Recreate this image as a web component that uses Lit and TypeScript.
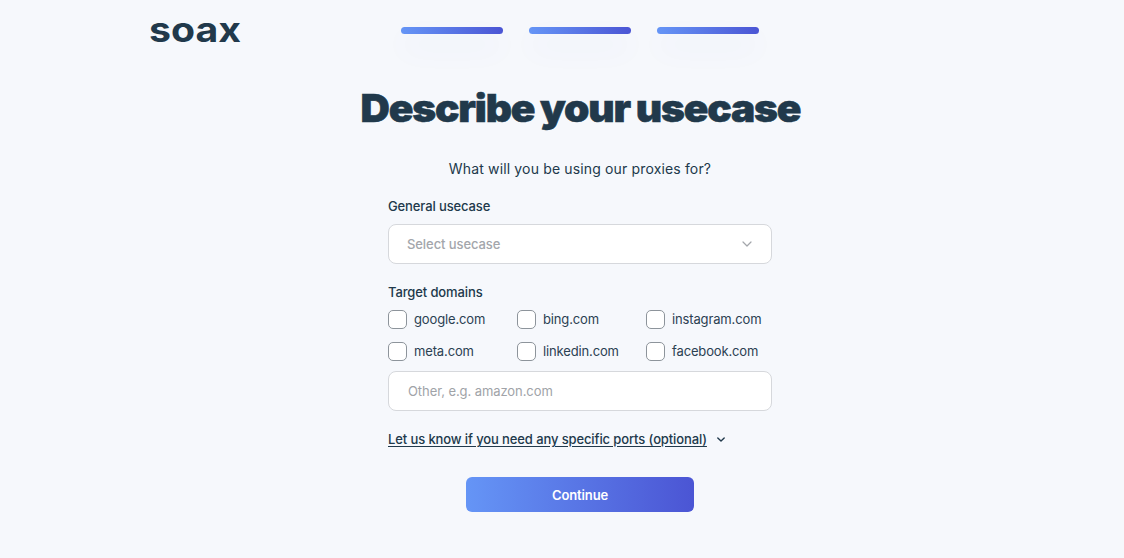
import { LitElement, html, css } from "lit";
import { customElement } from "lit/decorators.js";

const DOMAINS = ["google.com", "bing.com", "instagram.com", "meta.com", "linkedin.com", "facebook.com"];

const chevron = html`<svg viewBox="0 0 10 6" width="10" height="6" fill="none" stroke="currentColor" stroke-linecap="round" stroke-linejoin="round"><path d="M1 1l4 4 4-4" /></svg>`;

@customElement("app-root")
export class AppRoot extends LitElement {
  static styles = css`
    :host {
      display: block;
      width: 1124px;
      height: 558px;
      overflow: hidden;
      background: #f6f8fc;
      color: #21394b;
      font-family: Inter, "Liberation Sans", sans-serif;
    }
    .header {
      display: flex;
      align-items: center;
      height: 61px;
      padding-left: 149px;
    }
    .logo {
      width: 92px;
      margin-right: 160px;
      font-size: 35px;
      font-weight: 700;
      line-height: 59px;
      height: 61px;
      letter-spacing: 0;
      color: #21394b;
      transform: scaleX(1.12);
      transform-origin: left center;
    }
    .steps {
      display: flex;
      gap: 26px;
      margin-top: -1px;
    }
    .step {
      width: 102px;
      height: 7px;
      border-radius: 3.5px;
      background: linear-gradient(90deg, #6595f6, #4b55d4);
      box-shadow: 0 14px 30px rgba(75, 85, 212, 0.07);
    }
    .main {
      display: flex;
      flex-direction: column;
      align-items: center;
      padding-left: 36px;
    }
    h1 {
      margin: 22px 0 0;
      font-size: 38px;
      line-height: 50px;
      font-weight: 900;
      letter-spacing: -1.1px;
      word-spacing: -1px;
      white-space: nowrap;
      -webkit-text-stroke: 0.6px #21394b;
      transform: scaleX(1.07);
    }
    .sub {
      margin: 26px 0 0;
      font-size: 14px;
      line-height: 20px;
      letter-spacing: 0.15px;
    }
    .form {
      width: 384px;
      display: flex;
      flex-direction: column;
    }
    .label {
      font-size: 13px;
      font-weight: 500;
      line-height: 18px;
      letter-spacing: -0.12px;
    }
    .label.first {
      margin-top: 18px;
    }
    .label.second {
      margin-top: 19px;
    }
    .field {
      box-sizing: border-box;
      height: 40px;
      margin-top: 9px;
      display: flex;
      align-items: center;
      justify-content: space-between;
      background: #fff;
      border: 1px solid #d6d8dc;
      border-radius: 8px;
      font-size: 13px;
      letter-spacing: -0.08px;
    }
    .select {
      padding: 0 19px 1px 18px;
      color: #a3a6ab;
      font-weight: 500;
      stroke-width: 1.2;
    }
    .other {
      margin-top: 4px;
      padding: 0 19px;
      color: #a0a3a8;
    }
    .domains {
      display: grid;
      grid-template-columns: repeat(3, 129px);
      grid-auto-rows: 32px;
      margin-top: 2px;
      margin-right: -3px;
    }
    .domain {
      display: flex;
      align-items: center;
      gap: 7px;
      font-size: 13px;
      letter-spacing: -0.14px;
      color: #2b4152;
    }
    .box {
      box-sizing: border-box;
      width: 19px;
      height: 19px;
      background: #fff;
      border: 1px solid #8d949b;
      border-radius: 5px;
    }
    .ports {
      display: flex;
      align-items: center;
      gap: 10px;
      margin-top: 19px;
      font-size: 13px;
      line-height: 18px;
      font-weight: 500;
      letter-spacing: -0.11px;
      stroke-width: 1.7;
    }
    .ports span {
      text-decoration: underline;
      text-underline-offset: 2px;
    }
    .ports svg {
      width: 8px;
      height: 5px;
    }
    .continue {
      align-self: center;
      width: 228px;
      height: 35px;
      margin-top: 29px;
      border: 0;
      border-radius: 6px;
      background: linear-gradient(90deg, #6595f6, #4b55d4);
      color: #fff;
      font: 600 13px Inter, "Liberation Sans", sans-serif;
      letter-spacing: -0.12px;
    }
  `;

  render() {
    return html`
      <div class="header">
        <div class="logo">soax</div>
        <div class="steps">
          <div class="step"></div>
          <div class="step"></div>
          <div class="step"></div>
        </div>
      </div>
      <div class="main">
        <h1>Describe your usecase</h1>
        <p class="sub">What will you be using our proxies for?</p>
        <div class="form">
          <div class="label first">General usecase</div>
          <div class="field select">Select usecase ${chevron}</div>
          <div class="label second">Target domains</div>
          <div class="domains">
            ${DOMAINS.map(
              (d) => html`<div class="domain"><div class="box"></div>${d}</div>`
            )}
          </div>
          <div class="field other">Other, e.g. amazon.com</div>
          <div class="ports"><span>Let us know if you need any specific ports (optional)</span> ${chevron}</div>
          <button class="continue">Continue</button>
        </div>
      </div>
    `;
  }
}
